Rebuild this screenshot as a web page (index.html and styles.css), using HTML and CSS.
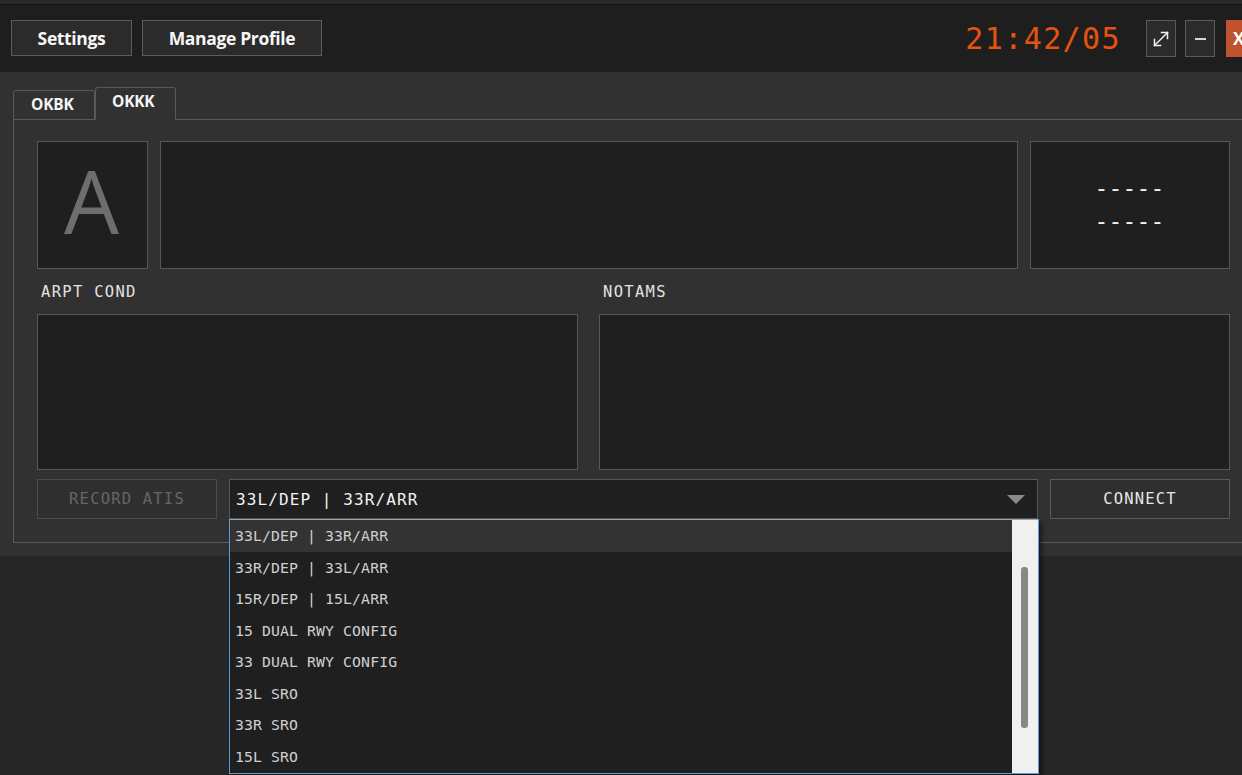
FILE: index.html
```html
<!DOCTYPE html>
<html>
<head>
<meta charset="utf-8">
<link rel="stylesheet" href="styles.css">
</head>
<body>
<div class="app">
  <div class="topstrip"></div>
  <header class="header">
    <div class="hdr-left">
      <button class="hbtn settings">Settings</button>
      <button class="hbtn manage">Manage Profile</button>
    </div>
    <div class="hdr-right">
      <span class="clock">21:42/05</span>
      <button class="wbtn expand" aria-label="Maximize">
        <svg width="18" height="18" viewBox="0 0 18 18" fill="none" stroke="#f2f2f2" stroke-width="1.5" stroke-linecap="square">
          <path d="M2.5 15.5 L15.5 2.5"/>
          <path d="M2.5 9.5 V15.5 H8.5"/>
          <path d="M9.5 2.5 H15.5 V8.5"/>
        </svg>
      </button>
      <button class="wbtn minimize" aria-label="Minimize"><span class="minbar"></span></button>
      <button class="wbtn close">X</button>
    </div>
  </header>
  <main class="main">
    <div class="tabs">
      <div class="tab">OKBK</div>
      <div class="tab active">OKKK</div>
    </div>
    <div class="panel">
      <div class="row1">
        <div class="box letter-box"><span class="big-a">A</span></div>
        <div class="box"></div>
        <div class="box dash-box">
          <div class="dashes">-----</div>
          <div class="dashes">-----</div>
        </div>
      </div>
      <div class="row2">
        <div class="col">
          <div class="label">ARPT COND</div>
          <div class="box tall"></div>
        </div>
        <div class="col">
          <div class="label">NOTAMS</div>
          <div class="box tall"></div>
        </div>
      </div>
      <div class="row3">
        <button class="pbtn disabled">RECORD ATIS</button>
        <div class="combo">
          <span class="combo-text">33L/DEP | 33R/ARR</span>
          <span class="caret"></span>
          <div class="dropdown">
            <ul class="items">
              <li class="item hl">33L/DEP | 33R/ARR</li>
              <li class="item">33R/DEP | 33L/ARR</li>
              <li class="item">15R/DEP | 15L/ARR</li>
              <li class="item">15 DUAL RWY CONFIG</li>
              <li class="item">33 DUAL RWY CONFIG</li>
              <li class="item">33L SRO</li>
              <li class="item">33R SRO</li>
              <li class="item">15L SRO</li>
            </ul>
            <div class="scrollbar"><div class="thumb"></div></div>
          </div>
        </div>
        <button class="pbtn">CONNECT</button>
      </div>
    </div>
  </main>
</div>
</body>
</html>
```
FILE: styles.css
```css
* { box-sizing: border-box; }
html, body {
  margin: 0;
  padding: 0;
  width: 1242px;
  height: 775px;
  overflow: hidden;
  background: #262626;
}
body {
  font-family: "Open Sans", "Noto Sans", sans-serif;
  color: #e8e8e8;
}
button {
  font: inherit;
  color: inherit;
  margin: 0;
  cursor: default;
}
.app {
  width: 1262px;
}
.topstrip {
  height: 5px;
  background: #282828;
  border-bottom: 1px solid #151515;
}
.header {
  height: 67px;
  background: #1e1e1e;
  display: flex;
  justify-content: space-between;
  align-items: flex-start;
  padding: 15px 6px 0 11px;
}
.hdr-left {
  display: flex;
  gap: 10px;
}
.hbtn {
  height: 36px;
  background: #2b2b2b;
  border: 1px solid #5c5c5c;
  font-family: "Open Sans", sans-serif;
  font-weight: 700;
  font-size: 17.5px;
  letter-spacing: -0.35px;
  color: #f6f6f6;
  padding: 0 0 1px 0;
}
.settings { width: 121px; }
.manage { width: 180px; }
.hdr-right {
  display: flex;
  align-items: flex-start;
}
.clock {
  font-family: "DejaVu Sans Mono", monospace;
  font-size: 30px;
  letter-spacing: 1.4px;
  color: #e6530f;
  line-height: 37px;
  margin-right: 25px;
}
.wbtn {
  width: 30px;
  height: 37px;
  background: #2b2b2b;
  border: 1px solid #5a5a5a;
  padding: 0;
  display: flex;
  align-items: center;
  justify-content: center;
}
.minimize { margin-left: 9px; }
.minbar {
  display: block;
  width: 11px;
  height: 2px;
  background: #d6d6d6;
}
.close {
  margin-left: 11px;
  background: #c0522d;
  border-color: #c0522d;
  font-family: "Open Sans", sans-serif;
  font-weight: 700;
  font-size: 17px;
  color: #fff;
  justify-content: flex-start;
  padding-left: 6px;
}
.main {
  background: #313131;
  padding: 15px 0 13px 13px;
}
.tabs {
  display: flex;
  align-items: flex-end;
  height: 33px;
  position: relative;
  z-index: 2;
  margin-bottom: -1px;
}
.tab {
  width: 82px;
  height: 30px;
  border: 1px solid #5a5a5a;
  border-radius: 3px 3px 0 0;
  background: #313131;
  font-weight: 700;
  font-size: 15.5px;
  letter-spacing: -0.2px;
  color: #f4f4f4;
  display: flex;
  align-items: center;
  padding-left: 17px;
  padding-bottom: 3px;
}
.tab.active {
  width: 81px;
  height: 33px;
  padding-left: 16px;
  padding-bottom: 5px;
  border-bottom: 1px solid #313131;
}
.panel {
  width: 1241px;
  border: 1px solid #5a5a5a;
  padding: 21px 23px 23px 23px;
  background: #313131;
}
.box {
  background: #1f1f1f;
  border: 1px solid #575757;
}
.row1 {
  display: grid;
  grid-template-columns: 111px 1fr 200px;
  gap: 12px;
  height: 128px;
  width: 1193px;
}
.letter-box {
  display: flex;
  align-items: center;
  justify-content: center;
}
.big-a {
  font-family: "Open Sans", sans-serif;
  font-size: 87px;
  font-weight: 400;
  color: #6e6e6e;
  line-height: 1;
  margin-top: -10px;
  margin-left: -2px;
}
.dash-box {
  display: flex;
  flex-direction: column;
  align-items: center;
  justify-content: center;
  gap: 6px;
}
.dashes {
  font-family: "DejaVu Sans Mono", monospace;
  font-size: 23px;
  letter-spacing: 0.2px;
  line-height: 27px;
  color: #f0f0f0;
  padding-left: 0;
  margin-left: -1px;
}
.row2 {
  display: grid;
  grid-template-columns: 541px 1fr;
  gap: 21px;
  width: 1193px;
}
.col {
  display: flex;
  flex-direction: column;
}
.label {
  height: 45px;
  display: flex;
  align-items: center;
  padding-left: 4px;
  font-family: "DejaVu Sans Mono", monospace;
  font-size: 15.5px;
  letter-spacing: 1.3px;
  color: #e2e2e2;
}
.box.tall {
  height: 156px;
}
.row3 {
  display: grid;
  grid-template-columns: 180px 1fr 180px;
  gap: 12px;
  margin-top: 9px;
  height: 40px;
  width: 1193px;
}
.pbtn {
  background: #2f2f2f;
  border: 1px solid #5a5a5a;
  font-family: "DejaVu Sans Mono", monospace;
  font-size: 15.5px;
  letter-spacing: 1.2px;
  color: #e6e6e6;
  padding: 0;
}
.pbtn.disabled {
  color: #666;
  border-color: #4c4c4c;
}
.combo {
  position: relative;
  background: #1f1f1f;
  border: 1px solid #575757;
  display: flex;
  align-items: center;
  padding-left: 6px;
}
.combo-text {
  font-family: "DejaVu Sans Mono", monospace;
  font-size: 16px;
  letter-spacing: 1.1px;
  color: #f2f2f2;
}
.caret {
  position: absolute;
  right: 12px;
  top: 15px;
  width: 0;
  height: 0;
  border-left: 9px solid transparent;
  border-right: 9px solid transparent;
  border-top: 9px solid #8a8a8a;
}
.dropdown {
  position: absolute;
  left: -1px;
  top: 39px;
  width: 810px;
  height: 255px;
  border: 1px solid #5a9bd8;
  border-top-color: #8fa6bd;
  background: #1f1f1f;
  display: flex;
  box-shadow: 3px 3px 4px rgba(0, 0, 0, 0.45);
  z-index: 5;
}
.items {
  list-style: none;
  margin: 0;
  padding: 0;
  flex: 1;
}
.item {
  height: 31.5px;
  display: flex;
  align-items: center;
  padding-left: 5px;
  font-family: "DejaVu Sans Mono", monospace;
  font-size: 14.8px;
  letter-spacing: 0.1px;
  color: #cfcfcf;
}
.item.hl {
  background: #333333;
}
.scrollbar {
  width: 26px;
  background: #f0f0f0;
  position: relative;
}
.thumb {
  position: absolute;
  left: 9px;
  top: 47px;
  width: 7px;
  height: 161px;
  border-radius: 3px;
  background: #888888;
}
```
